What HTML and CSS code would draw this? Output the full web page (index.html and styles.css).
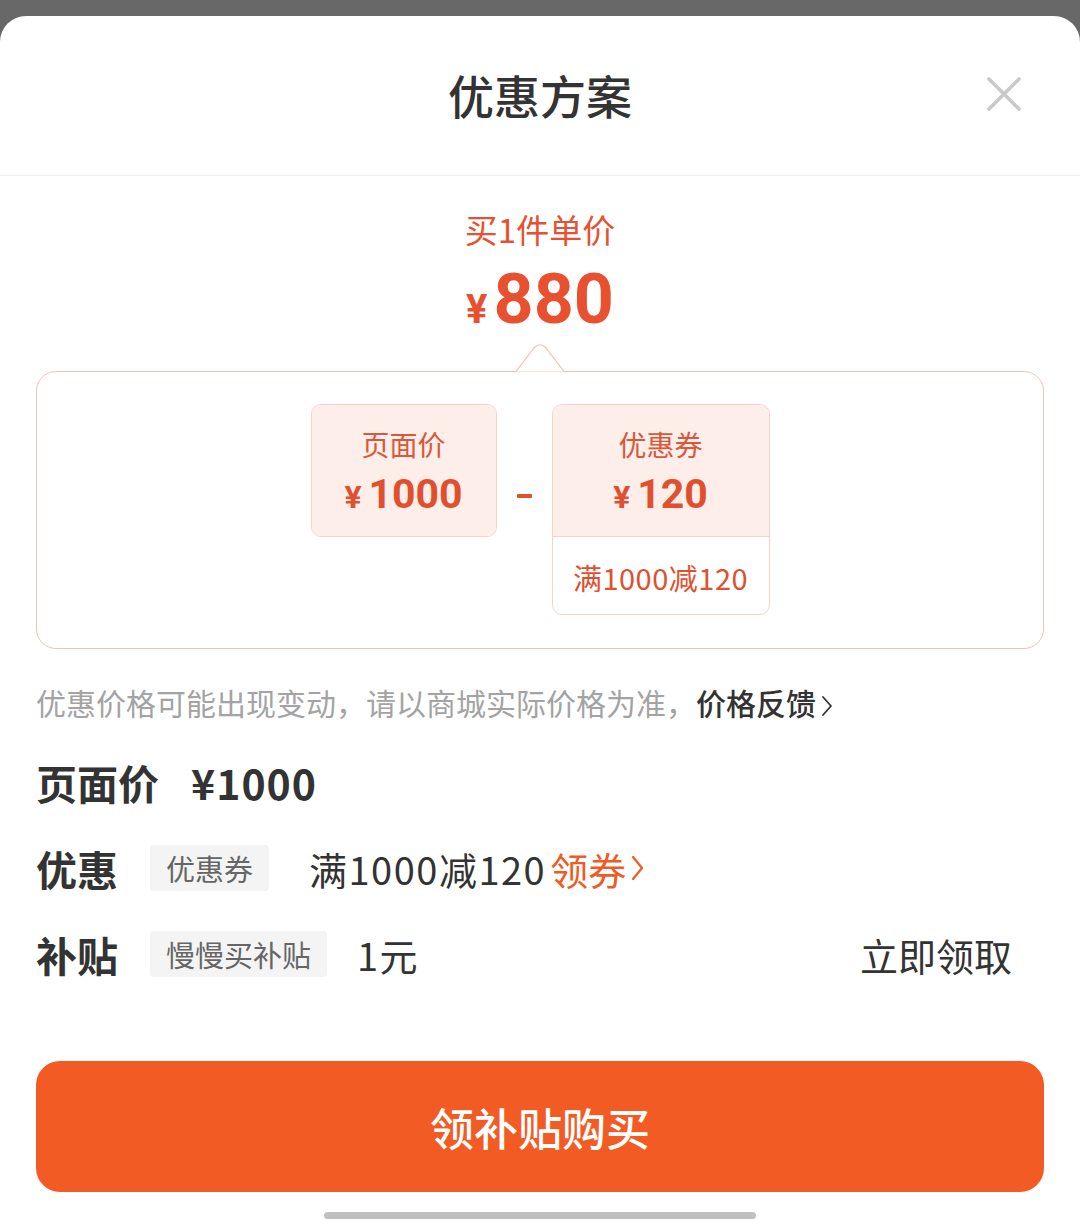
FILE: index.html
```html
<!DOCTYPE html>
<html lang="zh-CN">
<head>
    <meta charset="UTF-8">
    <meta name="viewport" content="width=device-width, initial-scale=1.0">
    <title>优惠方案</title>
    <link rel="stylesheet" href="styles.css">
</head>
<body>

    <div class="sheet">
        <div class="sheet-header">
            <span></span>
            <h2 class="sheet-title">优惠方案</h2>
            <button class="close-btn" aria-label="关闭">
                <svg width="36" height="36" viewBox="0 0 36 36">
                    <path d="M3 3 L33 33 M33 3 L3 33" stroke="#c9c9c9" stroke-width="3.6" stroke-linecap="round" fill="none"/>
                </svg>
            </button>
        </div>

        <div class="summary">
            <div class="unit-label">买1件单价</div>
            <div class="unit-price"><span class="yen">¥</span>880</div>
        </div>

        <div class="content">
            <div class="formula">
                <svg class="notch" width="64" height="32" viewBox="0 0 64 32">
                    <path d="M0 31.5 H8 L26 8 Q32 1.5 38 8 L56 31.5 H64" fill="#fff" stroke="#efc3b8" stroke-width="1.2"/>
                </svg>
                <div class="formula-card">
                    <div class="card-top">
                        <div class="card-label">页面价</div>
                        <div class="card-price"><span class="yen">¥</span>1000</div>
                    </div>
                </div>
                <span class="minus"></span>
                <div class="formula-card">
                    <div class="card-top split">
                        <div class="card-label">优惠券</div>
                        <div class="card-price"><span class="yen">¥</span>120</div>
                    </div>
                    <div class="card-rule">满1000减120</div>
                </div>
            </div>

            <p class="notice">优惠价格可能出现变动，请以商城实际价格为准，<span class="notice-link">价格反馈<svg width="14" height="24" viewBox="0 0 14 24"><path d="M3 3 L11 12 L3 21" stroke="#333" stroke-width="1.8" fill="none" stroke-linecap="round" stroke-linejoin="round"/></svg></span></p>

            <div class="row price-row">
                <span class="row-label">页面价</span>
                <span class="row-price">¥1000</span>
            </div>

            <div class="row">
                <span class="row-label">优惠</span>
                <span class="tag">优惠券</span>
                <span class="row-text wide">满1000减120</span>
                <span class="get-coupon">领券<svg width="16" height="30" viewBox="0 0 16 30"><path d="M3 4 L12 15 L3 26" stroke="#f05a24" stroke-width="2.2" fill="none" stroke-linecap="round" stroke-linejoin="round"/></svg></span>
            </div>

            <div class="row">
                <span class="row-label">补贴</span>
                <span class="tag">慢慢买补贴</span>
                <span class="row-text">1元</span>
                <span class="claim">立即领取</span>
            </div>

            <button class="buy-btn">领补贴购买</button>
        </div>

        <div class="home-indicator"></div>
    </div>

</body>
</html>
```

FILE: styles.css
```css
body {
    margin: 0;
    background-color: #686868;
    font-family: "Noto Sans CJK SC", "Noto Sans", sans-serif;
    color: #333;
}

.sheet {
    margin-top: 16px;
    min-height: calc(100vh - 16px);
    background: #fff;
    border-radius: 26px 26px 0 0;
    display: flex;
    flex-direction: column;
}

.sheet-header {
    height: 159px;
    border-bottom: 1px solid #f0f0f0;
    display: grid;
    grid-template-columns: 1fr auto 1fr;
    align-items: center;
}

.sheet-title {
    margin: 0;
    font-size: 46px;
    font-weight: 500;
    line-height: 60px;
    color: #333;
    padding-bottom: 4px;
}

.close-btn {
    justify-self: end;
    margin-right: 58px;
    margin-bottom: 4px;
    padding: 0;
    border: none;
    background: none;
    display: flex;
}

.summary {
    padding-top: 33px;
    text-align: center;
    color: #e8502f;
}

.unit-label {
    font-size: 33px;
    line-height: 40px;
}

.unit-price {
    height: 72px;
    margin-top: 14px;
    display: flex;
    justify-content: center;
    align-items: baseline;
    font-family: Roboto, "Noto Sans CJK SC", sans-serif;
    font-size: 70px;
    font-weight: 700;
    line-height: 72px;
}

.unit-price .yen {
    font-size: 40px;
    line-height: 1;
    margin-right: 6px;
}

.content {
    padding: 0 36px;
}

.formula {
    position: relative;
    margin-top: 36px;
    border: 1px solid #efc3b8;
    border-radius: 20px;
    padding: 32px 0 33px;
    display: flex;
    justify-content: center;
    align-items: flex-start;
}

.notch {
    position: absolute;
    top: -32px;
    left: 50%;
    transform: translateX(-50%);
}

.formula-card {
    border: 1px solid #f6d3ca;
    border-radius: 10px;
    overflow: hidden;
    text-align: center;
    color: #e0502f;
}

.card-top {
    width: 184px;
    padding: 21px 0 18px;
    background: #fdeeea;
}

.card-top.split {
    width: 216px;
    border-bottom: 1px solid #f6d3ca;
}

.card-label {
    font-size: 28px;
    line-height: 36px;
    color: #d9573a;
}

.card-price {
    height: 48px;
    margin-top: 8px;
    display: flex;
    justify-content: center;
    align-items: baseline;
    font-family: Roboto, "Noto Sans CJK SC", sans-serif;
    font-size: 41px;
    font-weight: 700;
    line-height: 48px;
}

.card-price .yen {
    font-size: 32px;
    line-height: 1;
    margin-right: 7px;
}

.card-rule {
    height: 77px;
    line-height: 80px;
    font-size: 29px;
    letter-spacing: 0.5px;
    color: #e0502f;
}

.minus {
    width: 15px;
    height: 4px;
    margin: 90px 20px 0;
    background: #e0502f;
    border-radius: 1px;
}

.notice {
    margin: 33px 0 0;
    font-size: 30px;
    line-height: 40px;
    color: #a3a3a3;
    white-space: nowrap;
}

.notice-link {
    color: #333;
    font-weight: 500;
}

.notice-link svg {
    vertical-align: -3px;
    margin-left: 4px;
}

.row {
    display: flex;
    align-items: center;
    height: 50px;
    margin-top: 36px;
}

.price-row {
    margin-top: 35px;
}

.row-label {
    font-size: 41px;
    font-weight: 700;
    line-height: 50px;
    margin-right: 32px;
}

.row-price {
    font-size: 41px;
    font-weight: 700;
    letter-spacing: 1px;
}

.tag {
    height: 46px;
    line-height: 46px;
    padding: 0 16px;
    background: #f4f4f4;
    border-radius: 4px;
    font-size: 29px;
    color: #666;
}

.row-text {
    margin-left: 30px;
    font-size: 38px;
    letter-spacing: 1.5px;
    color: #333;
}

.row-text.wide {
    margin-left: 40px;
}

.get-coupon {
    margin-left: 4px;
    font-size: 38px;
    color: #f05a24;
    display: flex;
    align-items: center;
}

.get-coupon svg {
    margin-left: 4px;
}

.claim {
    margin-left: auto;
    margin-right: 32px;
    font-size: 38px;
    color: #333;
}

.buy-btn {
    display: block;
    width: 100%;
    height: 131px;
    margin-top: 82px;
    border: none;
    border-radius: 24px;
    background: #f25b23;
    color: #fff;
    font-family: "Noto Sans CJK SC", sans-serif;
    font-size: 44px;
    font-weight: 500;
}

.home-indicator {
    width: 432px;
    height: 7px;
    margin: 20px auto 0;
    background: #c0c0c0;
    border-radius: 4px;
}
```
